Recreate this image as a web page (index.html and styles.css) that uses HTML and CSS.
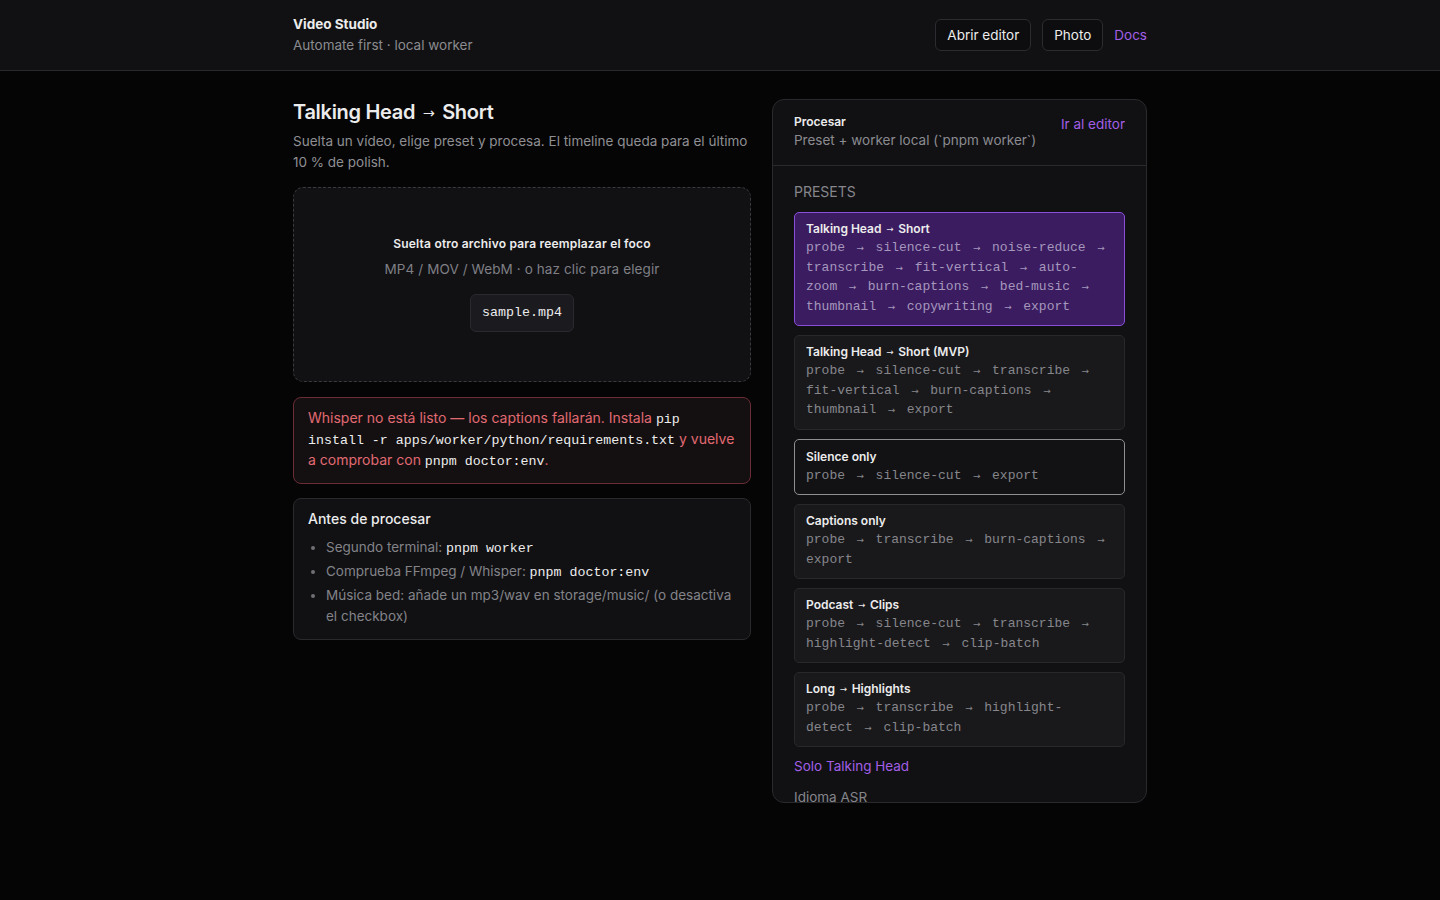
FILE: index.html
```html
<!DOCTYPE html>
<html lang="es">
<head>
  <meta charset="UTF-8" />
  <title>Video Studio</title>
  <meta name="viewport" content="width=device-width, initial-scale=1" />
  <link rel="stylesheet" href="styles.css">
</head>
<body>

  <header class="topbar">
    <div class="topbar-inner">
      <div class="brand">
        <strong>Video Studio</strong>
        <span>Automate first · local worker</span>
      </div>
      <nav class="top-nav">
        <a href="#" class="btn">Abrir editor</a>
        <a href="#" class="btn">Photo</a>
        <a href="#" class="link">Docs</a>
      </nav>
    </div>
  </header>

  <main class="page">
    <section class="left-col">
      <h1>Talking Head <span class="arr">→</span> Short</h1>
      <p class="lead">Suelta un vídeo, elige preset y procesa. El timeline queda para el último 10 % de polish.</p>

      <div class="dropzone">
        <p class="drop-title">Suelta otro archivo para reemplazar el foco</p>
        <p class="drop-sub">MP4 / MOV / WebM · o haz clic para elegir</p>
        <span class="file-chip">sample.mp4</span>
      </div>

      <div class="alert">
        Whisper no está listo — los captions fallarán. Instala <code>pip install -r apps/worker/python/requirements.txt</code> y vuelve a comprobar con <code>pnpm doctor:env</code>.
      </div>

      <div class="card checklist">
        <h3>Antes de procesar</h3>
        <ul>
          <li>Segundo terminal: <code>pnpm worker</code></li>
          <li>Comprueba FFmpeg / Whisper: <code>pnpm doctor:env</code></li>
          <li>Música bed: añade un mp3/wav en storage/music/ (o desactiva el checkbox)</li>
        </ul>
      </div>
    </section>

    <aside class="panel">
      <div class="panel-head">
        <div>
          <strong>Procesar</strong>
          <span>Preset + worker local (`pnpm worker`)</span>
        </div>
        <a href="#" class="link">Ir al editor</a>
      </div>
      <div class="panel-body">
        <p class="label">PRESETS</p>
        <div class="presets">
          <button class="preset active">
            <strong>Talking Head <span class="arr">→</span> Short</strong>
            <span class="steps">probe <i>→</i> silence-cut <i>→</i> noise-reduce <i>→</i> transcribe <i>→</i> fit-vertical <i>→</i> auto-zoom <i>→</i> burn-captions <i>→</i> bed-music <i>→</i> thumbnail <i>→</i> copywriting <i>→</i> export</span>
          </button>
          <button class="preset">
            <strong>Talking Head <span class="arr">→</span> Short (MVP)</strong>
            <span class="steps">probe <i>→</i> silence-cut <i>→</i> transcribe <i>→</i> fit-vertical <i>→</i> burn-captions <i>→</i> thumbnail <i>→</i> export</span>
          </button>
          <button class="preset focus">
            <strong>Silence only</strong>
            <span class="steps">probe <i>→</i> silence-cut <i>→</i> export</span>
          </button>
          <button class="preset">
            <strong>Captions only</strong>
            <span class="steps">probe <i>→</i> transcribe <i>→</i> burn-captions <i>→</i> export</span>
          </button>
          <button class="preset">
            <strong>Podcast <span class="arr">→</span> Clips</strong>
            <span class="steps">probe <i>→</i> silence-cut <i>→</i> transcribe <i>→</i> highlight-detect <i>→</i> clip-batch</span>
          </button>
          <button class="preset">
            <strong>Long <span class="arr">→</span> Highlights</strong>
            <span class="steps">probe <i>→</i> transcribe <i>→</i> highlight-detect <i>→</i> clip-batch</span>
          </button>
        </div>
        <a href="#" class="link solo">Solo Talking Head</a>
        <p class="label field">Idioma ASR</p>
      </div>
    </aside>
  </main>

</body>
</html>
```

FILE: styles.css
```css
/* Reset and base */
* {
  box-sizing: border-box;
  margin: 0;
  padding: 0;
}
body {
  font-family: Inter, 'Noto Sans', sans-serif;
  background: #050506;
  color: #ececec;
  font-size: 14px;
}
a {
  text-decoration: none;
}
code, .file-chip, .steps {
  font-family: 'Liberation Mono', monospace;
}
code {
  line-height: 1;
}
.link {
  color: #a25fe6;
  font-size: 13.5px;
}
/* small thin arrow used inside titles */
.arr {
  font-family: 'DejaVu Sans', sans-serif;
  font-size: 0.72em;
  font-weight: 400;
  line-height: 1;
  margin: 0 0.2em;
  vertical-align: 1px;
}

/* Top bar */
.topbar {
  background: #111113;
  border-bottom: 1px solid #2a2a2d;
  height: 71px;
}
.topbar-inner {
  width: 854px;
  margin: 0 auto;
  height: 100%;
  display: flex;
  align-items: center;
  justify-content: space-between;
}
.brand {
  display: flex;
  flex-direction: column;
  gap: 5px;
  margin-top: -2px;
}
.brand strong {
  font-size: 13.5px;
  font-weight: 700;
}
.brand span {
  color: #8b8b8f;
  font-size: 13.5px;
}
.top-nav {
  display: flex;
  align-items: center;
  gap: 11px;
}
.btn {
  color: #ececec;
  font-size: 13.5px;
  border: 1px solid #2c2c30;
  background: #0d0d0f;
  border-radius: 6px;
  padding: 7px 11px;
}

/* Page layout */
.page {
  width: 854px;
  margin: 28px auto 0;
  display: grid;
  grid-template-columns: minmax(0, 1fr) 375px;
  gap: 21px;
  align-items: start;
}
.left-col {
  display: flex;
  flex-direction: column;
}
h1 {
  font-size: 20px;
  font-weight: 600;
  letter-spacing: -0.3px;
  line-height: 26px;
}
.lead {
  color: #8f8f93;
  font-size: 13.5px;
  line-height: 21px;
  margin-top: 6px;
  margin-bottom: 14px;
}

/* Drop zone */
.dropzone {
  height: 195px;
  border: 1.5px dashed #3a3a3e;
  border-radius: 10px;
  background: #111114;
  display: flex;
  flex-direction: column;
  align-items: center;
  justify-content: center;
  padding-bottom: 2px;
}
.drop-title {
  font-size: 12px;
  font-weight: 600;
  letter-spacing: 0.2px;
}
.drop-sub {
  color: #7f7f84;
  font-size: 13.5px;
  letter-spacing: 0.1px;
  margin-top: 10px;
}
.file-chip {
  margin-top: 17px;
  background: #1b1b1f;
  border: 1px solid #2a2a2e;
  border-radius: 6px;
  padding: 11px 11px;
  line-height: 14px;
  font-size: 13.3px;
}

/* Alert */
.alert {
  border: 1px solid #6b2c35;
  background: #141011;
  border-radius: 8px;
  padding: 9px 14px 13px;
  color: #e26a72;
  line-height: 21px;
  margin-top: 15px;
}
.alert code, .checklist code {
  color: #ededed;
  font-size: 13.3px;
}

/* Checklist card */
.card {
  border: 1px solid #2a2a2e;
  background: #111114;
  border-radius: 8px;
}
.checklist {
  margin-top: 14px;
  padding: 11px 14px 9px;
}
.checklist h3 {
  font-size: 14px;
  font-weight: 500;
  line-height: 18px;
}
.checklist ul {
  margin-top: 9px;
  padding-left: 18px;
  color: #838388;
  font-size: 13.5px;
  line-height: 21px;
}
.checklist li {
  margin-bottom: 3px;
}
.checklist li::marker {
  color: #6f6f74;
}

/* Right panel */
.panel {
  border: 1px solid #2a2a2e;
  background: #111114;
  border-radius: 12px;
  height: 704px;
  overflow: hidden;
}
.panel-head {
  display: flex;
  justify-content: space-between;
  align-items: flex-start;
  padding: 14px 21px 17px;
  border-bottom: 1px solid #2a2a2e;
}
.panel-head div {
  display: flex;
  flex-direction: column;
  gap: 3px;
}
.panel-head strong {
  font-size: 12px;
  font-weight: 600;
}
.panel-head span {
  color: #8b8b90;
  font-size: 13.5px;
}
.panel-head .link {
  margin-top: 2px;
}
.panel-body {
  padding: 17px 21px;
}
.label {
  color: #86868b;
  font-size: 14px;
}
.presets {
  display: flex;
  flex-direction: column;
  gap: 9px;
  margin-top: 12px;
}
.preset {
  text-align: left;
  font-family: inherit;
  display: flex;
  flex-direction: column;
  border: 1px solid #28282c;
  background: #19191c;
  border-radius: 5px;
  padding: 8px 15.25px 9px 11px;
  color: #ececec;
}
.preset strong {
  font-size: 12px;
  font-weight: 600;
  line-height: 16px;
}
.steps {
  color: #86868b;
  font-size: 13px;
  line-height: 19.5px;
  margin-top: 1px;
}
.steps i {
  font-style: normal;
  font-family: 'DejaVu Sans', sans-serif;
  font-size: 9px;
  line-height: 8px;
  display: inline-block;
  width: 15px;
  text-align: center;
}
.preset.active {
  background: #3b1c60;
  border-color: #8a4fd8;
}
.preset.active .steps {
  color: #a597bd;
}
.preset.focus {
  border-color: #8e8e93;
  background: #121215;
  padding-top: 9px;
}
.solo {
  display: block;
  margin-top: 11px;
}
.field {
  margin-top: 15px;
  font-size: 13.5px;
}
```
